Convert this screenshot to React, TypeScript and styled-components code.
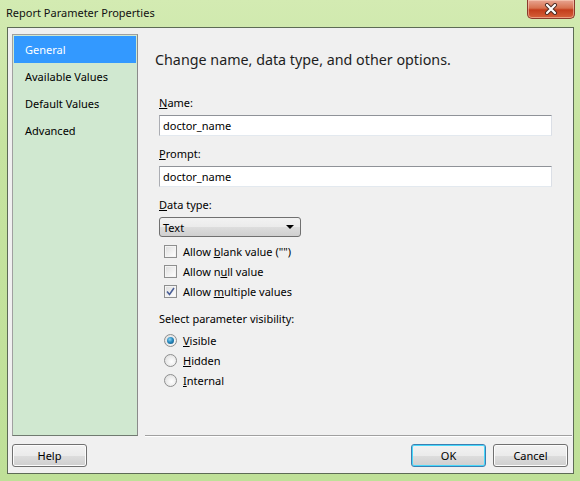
import React from 'react';
import styled, { createGlobalStyle } from 'styled-components';

const GlobalStyle = createGlobalStyle`
  html, body {
    margin: 0;
    padding: 0;
    background: #c4e29c;
  }
  body {
    font-family: "Noto Sans", "Open Sans", sans-serif;
    font-size: 11px;
    color: #000;
  }
`;

const Window = styled.div`
  width: 580px;
  height: 481px;
  box-sizing: border-box;
  display: flex;
  flex-direction: column;
  background: linear-gradient(180deg, #d3ebb2 0%, #c6e3a0 30%, #bfe098 100%);
  overflow: hidden;
`;

const TitleBar = styled.div`
  height: 27px;
  display: flex;
  align-items: flex-start;
  justify-content: space-between;
  padding-left: 6px;
  flex-shrink: 0;
`;

const Title = styled.div`
  margin-top: 5px;
  font-size: 11px;
  color: #111;
`;

const CloseButton = styled.div`
  width: 46px;
  height: 18px;
  margin-right: 5px;
  border: 1px solid #8a3a2c;
  border-top: none;
  border-radius: 0 0 5px 5px;
  background: linear-gradient(180deg, #e8a592 0%, #d7714f 45%, #c33d1c 55%, #d6613a 100%);
  display: flex;
  align-items: center;
  justify-content: center;
  box-shadow: inset 0 0 0 1px rgba(255, 220, 200, 0.5);
`;

const Client = styled.div`
  flex: 1;
  margin: 0 6px 7px 7px;
  border: 1px solid #5d6b55;
  background: #f0f0f0;
  display: flex;
  flex-direction: column;
`;

const Body = styled.div`
  display: flex;
  height: 407px;
  padding: 6px 0 0 4px;
  box-sizing: border-box;
`;

const Sidebar = styled.div`
  width: 126px;
  height: 402px;
  box-sizing: border-box;
  border: 1px solid;
  border-color: #a0a0a0 #8a8a8a #707a70 #a0a0a0;
  background: #d0e8d0;
  padding: 1px;
  display: flex;
  flex-direction: column;
  flex-shrink: 0;
`;

const NavItem = styled.div<{ $active?: boolean }>`
  height: 27px;
  line-height: 27px;
  padding-left: 11px;
  background: ${(p) => (p.$active ? '#3399ff' : 'transparent')};
  color: ${(p) => (p.$active ? '#fff' : '#000')};
`;

const Main = styled.div`
  flex: 1;
  display: flex;
  flex-direction: column;
  padding-left: 13px;
`;

const Heading = styled.div`
  font-size: 14.3px;
  color: #1e1e1e;
  margin: 15px 0 0 4px;
  height: 22px;
  line-height: 22px;
`;

const Form = styled.div`
  display: flex;
  flex-direction: column;
  padding: 24px 21px 0 8px;
`;

const Label = styled.div`
  height: 16px;
  line-height: 16px;
  margin-bottom: 4px;
`;

const TextBox = styled.div`
  height: 21px;
  box-sizing: border-box;
  border: 1px solid #abadb3;
  border-top-color: #8f9298;
  border-right-color: #dbdfe6;
  border-bottom-color: #e3e9ef;
  background: #fff;
  padding-left: 3px;
  line-height: 19px;
  margin-bottom: 10px;
`;

const Select = styled.div`
  width: 142px;
  height: 20px;
  box-sizing: border-box;
  border: 1px solid #707070;
  border-radius: 3px;
  background: linear-gradient(180deg, #f2f2f2 0%, #ebebeb 50%, #dddddd 51%, #cfcfcf 100%);
  display: flex;
  align-items: center;
  justify-content: space-between;
  padding: 0 6px 0 3px;
  margin-bottom: 4px;
`;

const Arrow = styled.span`
  width: 0;
  height: 0;
  border-left: 4px solid transparent;
  border-right: 4px solid transparent;
  border-top: 4px solid #000;
`;

const OptionRow = styled.div`
  display: flex;
  align-items: center;
  height: 20px;
  padding-left: 5px;
  gap: 6px;
`;

const Box = styled.span`
  width: 13px;
  height: 13px;
  box-sizing: border-box;
  border: 1px solid #8e8f8f;
  background: linear-gradient(135deg, #dcdcdc 0%, #f6f6f6 70%, #ffffff 100%);
  box-shadow: inset 0 0 0 1px #f4f4f4;
  display: flex;
  align-items: center;
  justify-content: center;
`;

const Radio = styled.span<{ $checked?: boolean }>`
  width: 13px;
  height: 13px;
  box-sizing: border-box;
  border-radius: 50%;
  border: 1px solid #8e8f8f;
  background: radial-gradient(circle at 60% 60%, #ffffff 0%, #e4e4e4 70%, #cfcfcf 100%);
  display: flex;
  align-items: center;
  justify-content: center;
  &::after {
    content: '';
    display: ${(p) => (p.$checked ? 'block' : 'none')};
    width: 7px;
    height: 7px;
    border-radius: 50%;
    background: radial-gradient(circle at 40% 35%, #8fd6f4 0%, #2a8bc0 45%, #0d4a73 100%);
  }
`;

const SectionLabel = styled.div`
  height: 16px;
  line-height: 16px;
  margin-top: 10px;
  margin-bottom: 3px;
`;

const Separator = styled.div`
  height: 0;
  border-top: 1px solid #a0a0a0;
  border-bottom: 1px solid #ffffff;
  margin: 0 1px 0 137px;
`;

const Footer = styled.div`
  display: flex;
  align-items: center;
  padding: 7px 5px 0 4px;
  gap: 7px;
`;

const Spacer = styled.div`
  flex: 1;
`;

const Button = styled.div<{ $default?: boolean }>`
  width: 75px;
  height: 23px;
  box-sizing: border-box;
  border: 1px solid ${(p) => (p.$default ? '#3c7fb1' : '#707070')};
  border-radius: 3px;
  background: linear-gradient(180deg, #f2f2f2 0%, #ebebeb 50%, #dddddd 51%, #cfcfcf 100%);
  box-shadow: inset 0 0 0 1px ${(p) => (p.$default ? '#48d8fb' : '#fcfcfc')};
  display: flex;
  align-items: center;
  justify-content: center;
`;

const U = styled.span`
  text-decoration: underline;
`;

const CheckMark = () => (
  <svg width="9" height="9" viewBox="0 0 9 9">
    <path d="M1 4.5 L3.5 7.5 L8 1" fill="none" stroke="#4a5f97" strokeWidth="1.6" />
  </svg>
);

const CloseGlyph = () => (
  <svg width="14" height="12" viewBox="0 0 14 12">
    <path d="M3 2 L11 10 M11 2 L3 10" stroke="#4a2a22" strokeWidth="4" strokeLinecap="round" />
    <path d="M3 2 L11 10 M11 2 L3 10" stroke="#ffffff" strokeWidth="2.2" strokeLinecap="round" />
  </svg>
);

const App: React.FC = () => {
  return (
    <>
      <GlobalStyle />
      <Window>
        <TitleBar>
          <Title>Report Parameter Properties</Title>
          <CloseButton>
            <CloseGlyph />
          </CloseButton>
        </TitleBar>
        <Client>
          <Body>
            <Sidebar>
              <NavItem $active>General</NavItem>
              <NavItem>Available Values</NavItem>
              <NavItem>Default Values</NavItem>
              <NavItem>Advanced</NavItem>
            </Sidebar>
            <Main>
              <Heading>Change name, data type, and other options.</Heading>
              <Form>
                <Label>
                  <U>N</U>ame:
                </Label>
                <TextBox>doctor_name</TextBox>
                <Label>
                  <U>P</U>rompt:
                </Label>
                <TextBox>doctor_name</TextBox>
                <Label>
                  <U>D</U>ata type:
                </Label>
                <Select>
                  <span>Text</span>
                  <Arrow />
                </Select>
                <OptionRow>
                  <Box />
                  <span>
                    Allow <U>b</U>lank value ("")
                  </span>
                </OptionRow>
                <OptionRow>
                  <Box />
                  <span>
                    Allow n<U>u</U>ll value
                  </span>
                </OptionRow>
                <OptionRow>
                  <Box>
                    <CheckMark />
                  </Box>
                  <span>
                    Allow <U>m</U>ultiple values
                  </span>
                </OptionRow>
                <SectionLabel>Select parameter visibility:</SectionLabel>
                <OptionRow>
                  <Radio $checked />
                  <span>
                    <U>V</U>isible
                  </span>
                </OptionRow>
                <OptionRow>
                  <Radio />
                  <span>
                    <U>H</U>idden
                  </span>
                </OptionRow>
                <OptionRow>
                  <Radio />
                  <span>
                    <U>I</U>nternal
                  </span>
                </OptionRow>
              </Form>
            </Main>
          </Body>
          <Separator />
          <Footer>
            <Button>Help</Button>
            <Spacer />
            <Button $default>OK</Button>
            <Button>Cancel</Button>
          </Footer>
        </Client>
      </Window>
    </>
  );
};

export default App;
